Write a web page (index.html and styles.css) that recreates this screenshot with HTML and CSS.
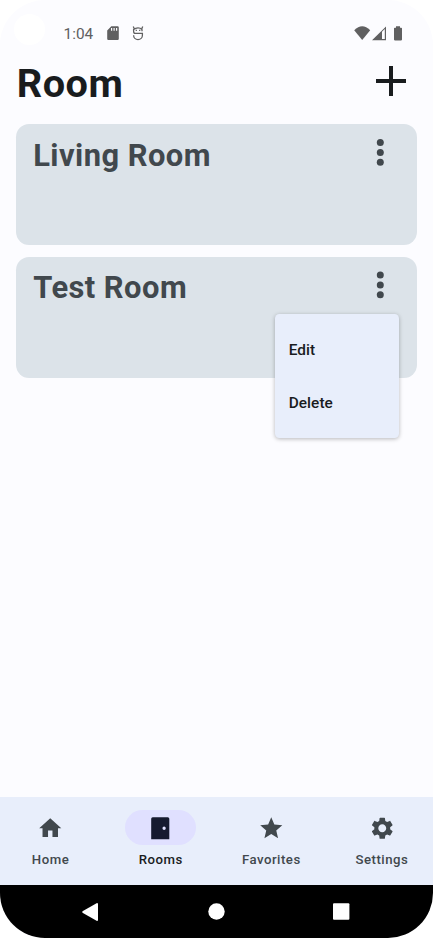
FILE: index.html
```html
<!DOCTYPE html>
<html lang="en">
<head>
<meta charset="utf-8">
<title>Room</title>
<link rel="stylesheet" href="styles.css">
</head>
<body>
<div class="screen">
  <span class="camera"></span>
  <header class="status">
    <span class="time">1:04</span>
    <svg class="sd" width="12" height="15" viewBox="0 0 12 15"><path fill="#606061" fill-rule="evenodd" d="M4.3.3H10.6Q11.8.3 11.8 1.5V12.8Q11.8 14 10.6 14H1.4Q.2 14 .2 12.8V4.4ZM4 2V4.7H5.2V2ZM6.5 2V4.7H7.7V2ZM9 2V4.7H10.2V2Z"/></svg>
    <svg class="debug" width="12" height="15" viewBox="0 0 12 15" fill="none" stroke="#606061" stroke-width="1.3"><path d="M10 5.3V3.6Q8.4 1.9 6 1.9T1.6 3.6V5.2Q1.6 7.4 3.4 7.4H10.4V9.3A4.3 4.3 0 0 1 1.6 9.3M2.3 3L1.3.5M9.7 3L10.7.5"/><path d="M3.7 4.4H4.9M7.1 4.4H8.3"/></svg>
    <svg class="signals" width="50" height="16" viewBox="0 0 50 16"><path fill="#606061" d="M.2 4.2Q8.2-3.6 16.2 4.2L8.2 14Z"/><path fill="#606061" fill-rule="evenodd" d="M32 .5V14.3H18ZM28 5.8V12.9H30.8V3Z"/><path fill="#606061" d="M42 .3H46V1.7H47.2Q48 1.7 48 2.5V13.6Q48 14.4 47.2 14.4H40.8Q40 14.4 40 13.6V2.5Q40 1.7 40.8 1.7H42Z"/></svg>
  </header>
  <div class="topbar">
    <h1>Room</h1>
    <svg width="30" height="30" viewBox="0 0 30 30"><path fill="#191c1e" d="M13 0H17V13H30V17H17V30H13V17H0V13H13Z"/></svg>
  </div>
  <main>
    <section class="card">
      <h2>Living Room</h2>
      <svg width="8" height="28" viewBox="0 0 8 28" fill="#41484d"><circle cx="4.3" cy="4.5" r="3.5"/><circle cx="4.3" cy="14.5" r="3.5"/><circle cx="4.3" cy="24.3" r="3.5"/></svg>
    </section>
    <section class="card">
      <h2>Test Room</h2>
      <svg width="8" height="28" viewBox="0 0 8 28" fill="#41484d"><circle cx="4.3" cy="4.1" r="3.5"/><circle cx="4.3" cy="14" r="3.5"/><circle cx="4.3" cy="23.8" r="3.5"/></svg>
      <div class="menu"><div>Edit</div><div>Delete</div></div>
    </section>
  </main>
  <nav>
    <div class="item"><span class="pill"><svg viewBox="0 0 24 24"><path d="M10 20V14H14V20H19V12H22L12 3 2 12H5V20Z"/></svg></span><span class="label">Home</span></div>
    <div class="item active"><span class="pill"><svg viewBox="0 0 24 24"><path fill-rule="evenodd" d="M5.2 2H18.8Q20.2 2 20.2 3.4V22H3.8V3.4Q3.8 2 5.2 2ZM15.5 10.5A1.5 1.5 0 1 0 15.5 13.5A1.5 1.5 0 1 0 15.5 10.5Z"/></svg></span><span class="label">Rooms</span></div>
    <div class="item"><span class="pill"><svg viewBox="0 0 24 24"><path d="M12 17.27L18.18 21l-1.64-7.03L22 9.24l-7.19-.61L12 2 9.19 8.63 2 9.24l5.46 4.73L5.82 21z"/></svg></span><span class="label">Favorites</span></div>
    <div class="item"><span class="pill"><svg viewBox="0 0 24 24"><path d="M19.14 12.94c.04-.3.06-.61.06-.94 0-.32-.02-.64-.07-.94l2.03-1.58c.18-.14.23-.41.12-.61l-1.92-3.32c-.12-.22-.37-.29-.59-.22l-2.39.96c-.5-.38-1.03-.7-1.62-.94l-.36-2.54c-.04-.24-.24-.41-.48-.41h-3.84c-.24 0-.43.17-.47.41l-.36 2.54c-.59.24-1.13.57-1.62.94l-2.39-.96c-.22-.08-.47 0-.59.22L2.74 8.87c-.12.21-.08.47.12.61l2.03 1.58c-.05.3-.09.63-.09.94s.02.64.07.94l-2.03 1.58c-.18.14-.23.41-.12.61l1.92 3.32c.12.22.37.29.59.22l2.39-.96c.5.38 1.03.7 1.62.94l.36 2.54c.05.24.24.41.48.41h3.84c.24 0 .44-.17.47-.41l.36-2.54c.59-.24 1.13-.56 1.62-.94l2.39.96c.22.08.47 0 .59-.22l1.92-3.32c.12-.22.07-.47-.12-.61l-2.01-1.58zM12 15.6c-1.98 0-3.6-1.62-3.6-3.6s1.62-3.6 3.6-3.6 3.6 1.62 3.6 3.6-1.62 3.6-3.6 3.6z"/></svg></span><span class="label">Settings</span></div>
  </nav>
  <footer>
    <svg width="16" height="18" viewBox="0 0 16 18"><path fill="#fff" d="M15 0Q16 0 16 1V17Q16 18 15 18L.5 9.7Q0 9 .5 8.3Z"/></svg>
    <svg width="17" height="17" viewBox="0 0 17 17"><circle cx="8.5" cy="8.5" r="8.2" fill="#fff"/></svg>
    <svg width="17" height="17" viewBox="0 0 17 17"><rect width="16.4" height="16.4" y=".3" rx="1" fill="#fff"/></svg>
  </footer>
</div>
</body>
</html>
```
FILE: styles.css
```css
* { box-sizing: border-box; }
body { margin: 0; background: #fff; font-family: Roboto, sans-serif; }
svg { display: block; flex: none; }
.screen {
  position: relative;
  display: flex;
  flex-direction: column;
  width: 433px;
  height: 938px;
  overflow: hidden;
  background: #fcfcff;
  border-radius: 45px;
}
.camera {
  position: absolute;
  left: 14px;
  top: 14px;
  width: 31px;
  height: 31px;
  border-radius: 50%;
  background: #fff;
}
.status {
  display: flex;
  align-items: flex-start;
  height: 57px;
  padding: 26px 29px 0 63.5px;
}
.time {
  width: 43.8px;
  font-size: 15.4px;
  line-height: 16px;
  color: #606061;
}
.sd { margin-right: 13px; }
.signals { margin-left: auto; }
.topbar {
  display: flex;
  justify-content: space-between;
  height: 67px;
  padding: 2px 27px 0 16.8px;
}
.topbar svg { margin-top: 7px; }
h1 {
  margin: 1px 0 0;
  font-size: 39.7px;
  line-height: 48px;
  font-weight: 700;
  letter-spacing: 0.5px;
  color: #191c1e;
}
main {
  flex: 1;
  display: flex;
  flex-direction: column;
  gap: 11.6px;
  padding: 0 16.4px;
}
.card {
  position: relative;
  display: flex;
  justify-content: space-between;
  height: 121px;
  padding: 11px 32.2px 0 16.8px;
  border-radius: 13.2px;
  background: #dce3e9;
}
.card svg { margin-top: 3px; }
h2 {
  margin: 0.8px 0 0;
  font-size: 30.9px;
  line-height: 40px;
  font-weight: 700;
  letter-spacing: 0.45px;
  color: #41484d;
}
.menu {
  position: absolute;
  right: 17.4px;
  top: 57.4px;
  width: 124px;
  height: 124px;
  padding: 10px 13.5px;
  border-radius: 4.4px;
  background: #e8eefb;
  box-shadow: 0 1px 4px rgba(0, 0, 0, 0.28);
  font-size: 15.4px;
  font-weight: 500;
  line-height: 53px;
  letter-spacing: 0.05px;
  color: #191c1e;
}
nav {
  display: flex;
  gap: 8.8px;
  height: 88px;
  padding: 13px 0.2px 0 0;
  background: #e8eefb;
}
.item {
  flex: 1;
  display: flex;
  flex-direction: column;
  align-items: center;
  gap: 6px;
  color: #41484d;
}
.item:nth-child(-n+2) { margin-left: -0.4px; }
.pill {
  display: grid;
  place-items: center;
  width: 70.6px;
  height: 35px;
  border-radius: 18px;
}
.pill svg { width: 26.5px; height: 26.5px; margin-top: 0.8px; fill: currentColor; }
.label {
  font-size: 13.2px;
  line-height: 18px;
  font-weight: 500;
  letter-spacing: 0.5px;
}
.active .pill { background: #e0e0ff; color: #161a30; }
.active .label { color: #191c1e; }
footer {
  display: flex;
  align-items: center;
  justify-content: space-between;
  height: 53px;
  padding: 0 83px 0 82.4px;
  background: #000;
}
footer svg:nth-child(2) { margin-left: 1px; }
```
